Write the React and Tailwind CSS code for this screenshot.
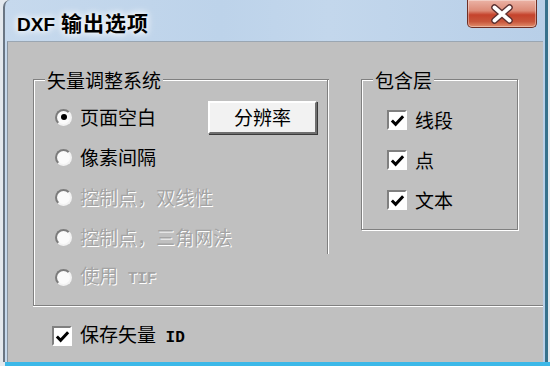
import React from "react";

const Radio = ({ checked }) => (
    <span className="w-[17px] h-[17px] shrink-0 rounded-full border-2 border-t-[#7c7c7c] border-l-[#7c7c7c] border-r-[#f2f2f2] border-b-[#f2f2f2] bg-[#fbfbfb] flex items-center justify-center">
        {checked && <span className="w-[6px] h-[6px] rounded-full bg-black" />}
    </span>
);

const Check = () => (
    <span className="w-[20px] h-[20px] shrink-0 border-2 border-t-[#808080] border-l-[#808080] border-r-white border-b-white bg-white flex items-center justify-center">
        <svg viewBox="0 0 16 16" className="w-[15px] h-[15px]">
            <path d="M2 8 L6 12 L14 3.5" fill="none" stroke="#000" strokeWidth="3.2" />
        </svg>
    </span>
);

const radios = [
    { label: "页面空白", checked: true },
    { label: "像素间隔" },
    { label: "控制点，双线性", disabled: true },
    { label: "控制点，三角网法", disabled: true },
    { label: "使用", mono: "TIF", disabled: true },
];

const layers = ["线段", "点", "文本"];

export default function App() {
    return (
        <div className="w-[550px] h-[366px] overflow-hidden bg-[#e4e9ee] flex flex-col font-['Noto_Sans_CJK_SC','Liberation_Sans',sans-serif] text-[19px] leading-[24px] text-black">
            {/* window */}
            <div className="h-[362px] ml-[3px] mr-[2px] flex flex-col border-l-2 border-r-[3px] border-l-[#6a7683] border-r-[#37718c] rounded-tl-[7px] bg-[linear-gradient(90deg,#c6d9ed,#bdd3ea_40%,#c3d7ec_60%,#b8cfe8)]">
                {/* title bar */}
                <div className="h-[41px] flex justify-between items-start shrink-0">
                    <div className="ml-[12px] mt-[12px] font-bold font-['Liberation_Sans','Noto_Sans_CJK_SC',sans-serif] [text-shadow:0_0_6px_#fff,0_0_10px_#fff] flex items-baseline">
                        <span className="text-[19px]">DXF</span>
                        <span className="text-[21px] ml-[6px] tracking-[1px]">输出选项</span>
                    </div>
                    <div className="mr-[8px] w-[70px] h-[28px] rounded-b-[5px] border border-t-0 border-[#6e2f25] bg-[linear-gradient(#ebb3a6,#dc8a76_40%,#c5432c_55%,#c8563b_80%,#e28f6d)] shadow-[inset_0_0_0_1px_rgba(255,255,255,0.35)]">
                        <svg viewBox="0 0 68 27" className="w-full h-full">
                            <path d="M26.5 7.5 L41.5 20.5 M41.5 7.5 L26.5 20.5" stroke="#5a3030" strokeWidth="6.5" strokeLinecap="round" />
                            <path d="M26.5 7.5 L41.5 20.5 M41.5 7.5 L26.5 20.5" stroke="#fff" strokeWidth="3.8" strokeLinecap="round" />
                        </svg>
                    </div>
                </div>

                {/* body */}
                <div className="flex-1 flex pl-[2px] pr-[2px]">
                    <div className="flex-1 bg-[#c0c0c0] border-t border-l border-t-[#9aa6b2] border-l-[#8a949e] flex flex-col">
                        <div className="pt-[37px] pl-[25px] flex items-start">
                            {/* left group */}
                            <div className="w-[296px] h-[226px] flex border-t border-l border-[#808080] shadow-[inset_1px_1px_0_#fff]">
                                <div className="flex-1 flex flex-col">
                                    <div className="-mt-[12px] ml-[11px] px-[2px] w-fit h-[24px] bg-[#c0c0c0]">矢量调整系统</div>
                                    <div className="mt-[5px] pl-[21px] flex flex-col">
                                        {radios.map((r, i) => (
                                            <div key={i} className="h-[40px] flex items-center gap-[8px]">
                                                <Radio checked={r.checked} />
                                                <span
                                                    className={
                                                        (i === 0 ? "w-[120px] " : "") +
                                                        (r.disabled ? "text-[#a4a4a4] [text-shadow:1px_1px_0_#fff]" : "")
                                                    }
                                                >
                                                    {r.label}
                                                    {r.mono && (
                                                        <span className="font-['Liberation_Mono',monospace] text-[16px] font-bold">&nbsp;{r.mono}</span>
                                                    )}
                                                </span>
                                                {i === 0 && (
                                                    <button className="w-[109px] h-[33px] bg-[#f2f2f2] border-2 border-t-white border-l-white border-r-[#6f6f6f] border-b-[#6f6f6f] shadow-[1px_1px_0_#3a3a3a] flex items-center justify-center">
                                                        分辨率
                                                    </button>
                                                )}
                                            </div>
                                        ))}
                                    </div>
                                </div>
                                <div className="w-[2px] h-[174px] border-l border-[#808080] bg-white" />
                            </div>

                            {/* right group */}
                            <div className="ml-[32px] w-[157px] h-[151px] border border-[#808080] shadow-[inset_1px_1px_0_#fff,1px_1px_0_#fff] flex flex-col">
                                <div className="-mt-[12px] ml-[11px] px-[2px] w-fit h-[24px] bg-[#c0c0c0]">包含层</div>
                                <div className="mt-[8px] pl-[25px] flex flex-col">
                                    {layers.map((l) => (
                                        <div key={l} className="h-[40px] flex items-center gap-[8px]">
                                            <Check />
                                            <span>{l}</span>
                                        </div>
                                    ))}
                                </div>
                            </div>
                        </div>

                        {/* separator */}
                        <div className="ml-[25px] h-[2px] border-t border-[#808080] bg-white" />

                        <div className="mt-[9px] h-[40px] pl-[44px] flex items-center gap-[8px]">
                            <Check />
                            <span>
                                保存矢量
                                <span className="font-['Liberation_Mono',monospace] text-[16px] font-bold">&nbsp;ID</span>
                            </span>
                        </div>
                    </div>
                </div>
            </div>
            <div className="ml-[5px] h-[4px] bg-[#3cb8e8]" />
        </div>
    );
}
